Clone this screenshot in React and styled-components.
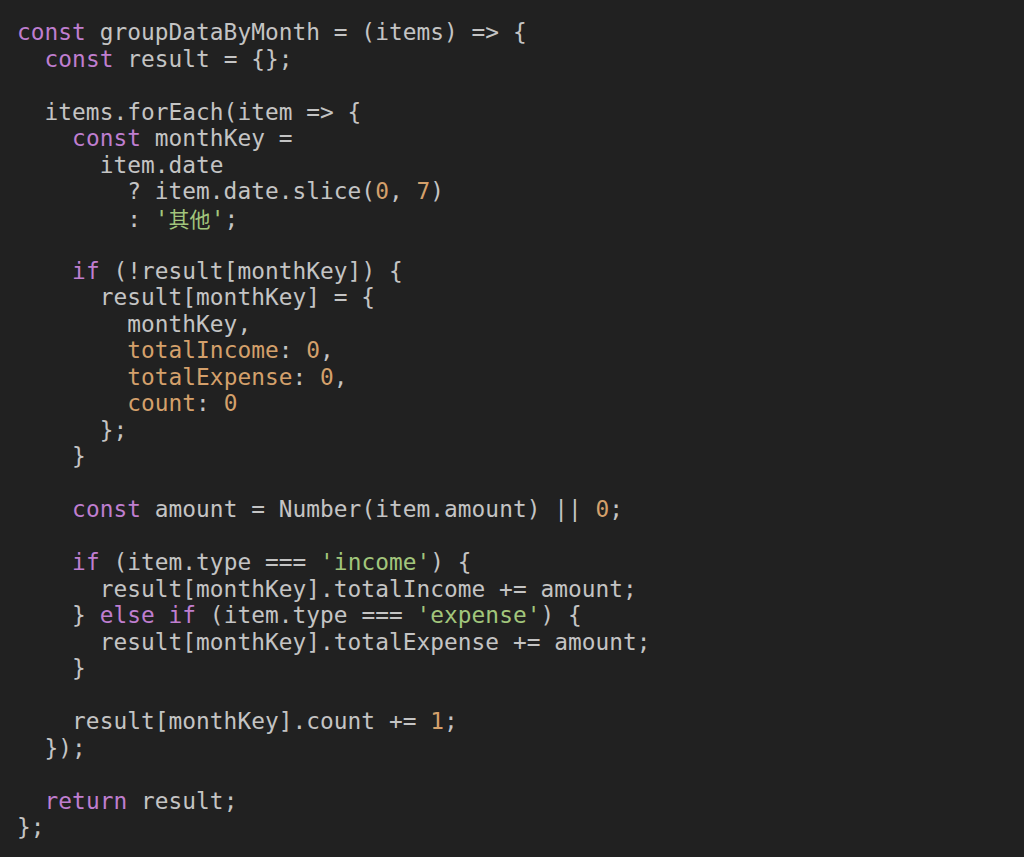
import styled, { createGlobalStyle } from "styled-components";

const GlobalStyle = createGlobalStyle`
  html, body {
    margin: 0;
    padding: 0;
    background: #212121;
  }
`;

const colors = {
  kw: "#bf7ecf",
  plain: "#c4c4c4",
  num: "#d4a06b",
  prop: "#d4a06b",
  str: "#a2c67c",
};

const Editor = styled.div`
  width: 1024px;
  height: 857px;
  box-sizing: border-box;
  padding: 19px 0 0 17px;
  background: #212121;
  font-family: "DejaVu Sans Mono", "Liberation Mono", "Noto Sans CJK SC", monospace;
  font-size: 22.8px;
  letter-spacing: 0.05px;
`;

const Line = styled.div`
  height: 26.53px;
  line-height: 26.53px;
  white-space: pre;
  color: ${colors.plain};
`;

const Tok = styled.span`
  color: ${(p) => colors[p.$kind] || colors.plain};
`;

const Cjk = styled.span`
  font-family: "Noto Sans CJK SC", sans-serif;
  font-size: 21px;
`;

const code = [
  [["kw", "const"], ["plain", " groupDataByMonth = (items) => {"]],
  [["plain", "  "], ["kw", "const"], ["plain", " result = {};"]],
  [],
  [["plain", "  items.forEach(item => {"]],
  [["plain", "    "], ["kw", "const"], ["plain", " monthKey ="]],
  [["plain", "      item.date"]],
  [["plain", "        ? item.date.slice("], ["num", "0"], ["plain", ", "], ["num", "7"], ["plain", ")"]],
  [["plain", "        : "], ["str", "'"], ["cjk", "其他"], ["str", "'"], ["plain", ";"]],
  [],
  [["plain", "    "], ["kw", "if"], ["plain", " (!result[monthKey]) {"]],
  [["plain", "      result[monthKey] = {"]],
  [["plain", "        monthKey,"]],
  [["plain", "        "], ["prop", "totalIncome"], ["plain", ": "], ["num", "0"], ["plain", ","]],
  [["plain", "        "], ["prop", "totalExpense"], ["plain", ": "], ["num", "0"], ["plain", ","]],
  [["plain", "        "], ["prop", "count"], ["plain", ": "], ["num", "0"]],
  [["plain", "      };"]],
  [["plain", "    }"]],
  [],
  [["plain", "    "], ["kw", "const"], ["plain", " amount = Number(item.amount) || "], ["num", "0"], ["plain", ";"]],
  [],
  [["plain", "    "], ["kw", "if"], ["plain", " (item.type === "], ["str", "'income'"], ["plain", ") {"]],
  [["plain", "      result[monthKey].totalIncome += amount;"]],
  [["plain", "    } "], ["kw", "else if"], ["plain", " (item.type === "], ["str", "'expense'"], ["plain", ") {"]],
  [["plain", "      result[monthKey].totalExpense += amount;"]],
  [["plain", "    }"]],
  [],
  [["plain", "    result[monthKey].count += "], ["num", "1"], ["plain", ";"]],
  [["plain", "  });"]],
  [],
  [["plain", "  "], ["kw", "return"], ["plain", " result;"]],
  [["plain", "};"]],
];

export default function App() {
  return (
    <>
      <GlobalStyle />
      <Editor>
        {code.map((tokens, i) => (
          <Line key={i}>
            {tokens.length === 0 ? " " : tokens.map(([kind, text], j) =>
              kind === "cjk" ? (
                <Tok key={j} $kind="str"><Cjk>{text}</Cjk></Tok>
              ) : (
                <Tok key={j} $kind={kind}>{text}</Tok>
              )
            )}
          </Line>
        ))}
      </Editor>
    </>
  );
}
